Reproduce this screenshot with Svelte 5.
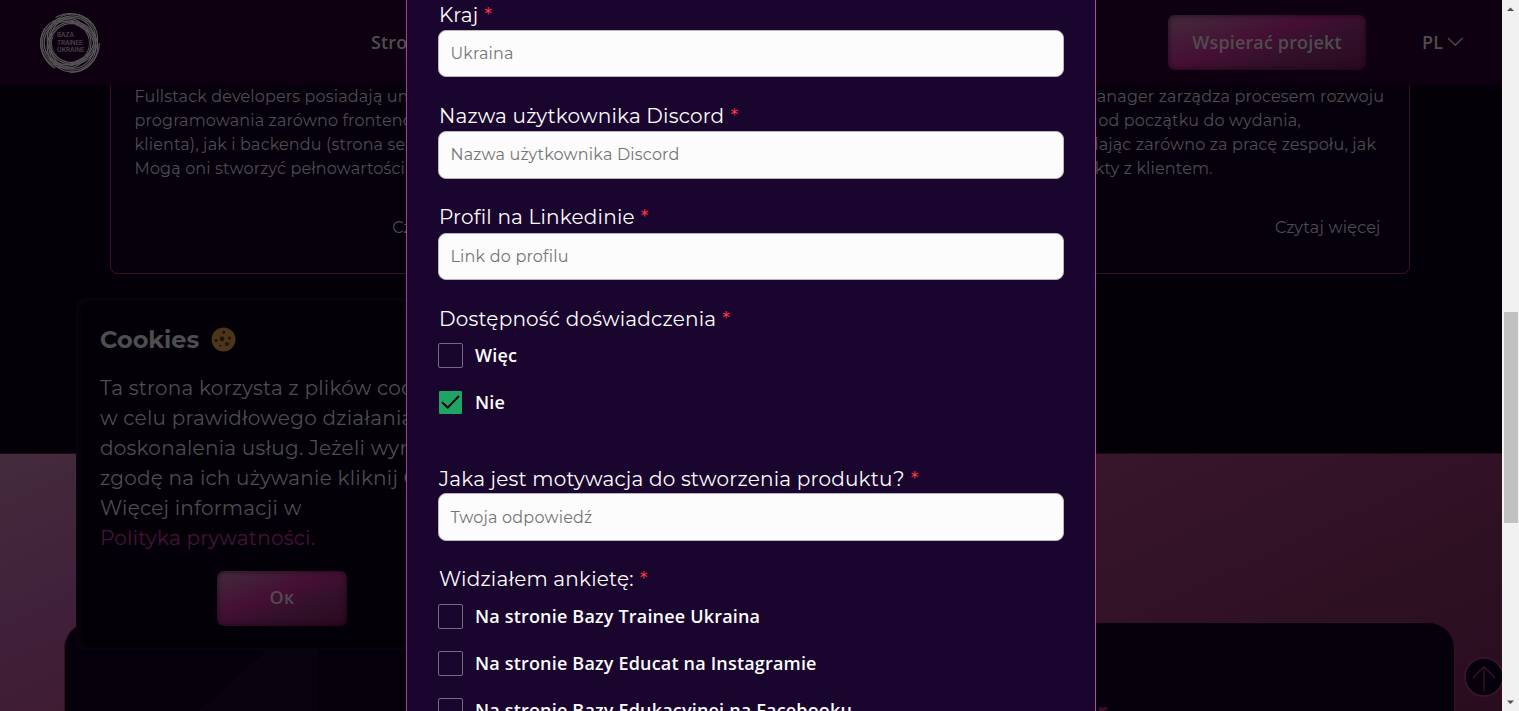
<script>
  const experience = [
    { text: 'Więc', checked: false },
    { text: 'Nie', checked: true }
  ];
  const sources = [
    { text: 'Na stronie Bazy Trainee Ukraina' },
    { text: 'Na stronie Bazy Educat na Instagramie' },
    { text: 'Na stronie Bazy Edukacyjnej na Facebooku' }
  ];
  const fields = [
    { label: 'Kraj', hint: 'Ukraina' },
    { label: 'Nazwa użytkownika Discord', hint: 'Nazwa użytkownika Discord' },
    { label: 'Profil na Linkedinie', hint: 'Link do profilu' }
  ];
  const motivation = { label: 'Jaka jest motywacja do stworzenia produktu?', hint: 'Twoja odpowiedź' };
  const leftCard = [
    'Fullstack developers posiadają um',
    'programowania zarówno frontend',
    'klienta), jak i backendu (strona ser',
    'Mogą oni stworzyć pełnowartości'
  ];
  const rightCard = [
    'Project manager zarządza procesem rozwoju',
    'produktu od początku do wydania,',
    'odpowiadając zarówno za pracę zespołu, jak',
    'i za kontakty z klientem.'
  ];
  const cookieLines = [
    'Ta strona korzysta z plików coo',
    'w celu prawidłowego działania',
    'doskonalenia usług. Jeżeli wyr',
    'zgodę na ich używanie kliknij O',
    'Więcej informacji w'
  ];
  const ringCentres = [[25.8, 30], [32.4, 26.2], [32.4, 33.8]];
  const ringRadii = [25.2, 23.4, 21.6];
</script>

{#snippet field(f)}
  <div class="field">
    <div class="label">{f.label}<b>*</b></div>
    <div class="input">{f.hint}</div>
  </div>
{/snippet}

{#snippet option(o)}
  <div class="option">
    <span class="box" class:checked={o.checked}>
      {#if o.checked}
        <svg width="23" height="23" viewBox="0 0 23 23"><path d="M3 11.2 8.7 16.6 20 5" fill="none" stroke="#0c0316" stroke-width="2" /></svg>
      {/if}
    </span>
    <span>{o.text}</span>
  </div>
{/snippet}

<div class="window">
  <div class="page">
    <header>
      <svg class="logo" width="60" height="60" viewBox="0 0 60 60">
        <g fill="none" stroke="#575557" stroke-width="1.2">
          {#each ringCentres as [cx, cy]}
            {#each ringRadii as r}<circle {cx} {cy} {r} />{/each}
          {/each}
          <circle cx="30" cy="30" r="29.3" stroke-dasharray="46 15.4" />
        </g>
        <circle cx="30.5" cy="30" r="18.4" fill="#0e0010" />
        <g class="logo-text" fill="#4f4d4f">
          <text x="17" y="23.8" textLength="17">BAZA</text>
          <text x="17" y="31.5" textLength="26">TRAINEE</text>
          <text x="17" y="39.2" textLength="28">UKRAINE</text>
        </g>
      </svg>
      <span class="nav">Stro</span>
      <div class="actions">
        <div class="button donate">Wspierać projekt</div>
        <div class="lang">PL
          <svg width="17" height="10" viewBox="0 0 17 10"><path d="M1 1 8.3 8.2 15.6 1" fill="none" stroke="#4c484c" stroke-width="1.4" /></svg>
        </div>
      </div>
    </header>

    <section class="cards">
      <article>
        {#each leftCard as s}<p>{s}</p>{/each}
        <div class="more">Czytaj więcej</div>
      </article>
      <article></article>
      <article>
        {#each rightCard as s}<p>{s}</p>{/each}
        <div class="more">Czytaj więcej</div>
      </article>
    </section>

    <section class="banner">
      <div class="panel">
        <svg width="260" height="88" viewBox="0 0 260 88"><path d="M133 88 233 0H252V88Z" fill="#090310" /></svg>
        <span class="headline">Dr</span>
      </div>
    </section>

    <div class="cookie">
      <h2>Cookies
        <svg width="25" height="25" viewBox="0 0 25 25">
          <circle cx="12.5" cy="12.5" r="12" fill="#4b351b" />
          <g fill="#201309"><circle cx="11" cy="11.8" r="2.4" /><circle cx="12.8" cy="5.3" r="1.5" /><circle cx="18.4" cy="11" r="1.5" /><circle cx="5.2" cy="13.6" r="1.5" /><circle cx="16" cy="17" r="2" /><circle cx="9.4" cy="18.8" r="1" /></g>
        </svg>
      </h2>
      {#each cookieLines as s}<p>{s}</p>{/each}
      <p class="link">Polityka prywatności.</p>
      <div class="button ok">Ок</div>
    </div>

    <svg class="up" width="40" height="40" viewBox="0 0 40 40">
      <circle cx="20" cy="20" r="19" fill="#06000d" stroke="#3d1533" stroke-width="1.5" />
      <path d="M20 34.5V10M9 21 20 9.7 31 21" fill="none" stroke="#35142e" stroke-width="1.3" />
    </svg>

    <div class="modal">
      {#each fields as f}{@render field(f)}{/each}
      <div class="label group">Dostępność doświadczenia<b>*</b></div>
      <div class="options first">
        {#each experience as o}{@render option(o)}{/each}
      </div>
      <div class="motivation">{@render field(motivation)}</div>
      <div class="label">Widziałem ankietę:<b>*</b></div>
      <div class="options second">
        {#each sources as o}{@render option(o)}{/each}
      </div>
    </div>
  </div>

  <div class="scrollbar">
    <svg width="17" height="17" viewBox="0 0 17 17"><path d="M5 11h7L8.5 7.5Z" fill="#505050" /></svg>
    <div class="thumb"></div>
    <svg class="down" width="17" height="17" viewBox="0 0 17 17"><path d="M5 6.5h7L8.5 10Z" fill="#505050" /></svg>
  </div>
</div>

<style>
  :global(body) { margin: 0; overflow: hidden; }
  .window { display: flex; width: 1519px; height: 711px; overflow: hidden; }
  .page {
    position: relative; width: 1502px; height: 711px; overflow: hidden;
    background: #030007; color: #4e4d4f; font-family: Montserrat, Inter, sans-serif;
    font-weight: 400; letter-spacing: .15px;
  }
  p, h2 { margin: 0; }

  header {
    display: flex; align-items: center; height: 85px; box-sizing: border-box;
    padding: 0 38px 0 40px; background: #0e0010;
    font: 600 18px "Open Sans", sans-serif;
  }
  .logo { flex: none; }
  .logo-text { font: 500 6.3px Inter, sans-serif; }
  .nav { margin-left: 271px; padding-bottom: 2px; }
  .actions { margin-left: auto; display: flex; align-items: center; gap: 56px; }
  .lang { display: flex; align-items: center; gap: 4px; width: 42px; padding-bottom: 2px; }
  .lang svg { flex: none; }
  .button {
    display: flex; align-items: center; justify-content: center; height: 55px; border-radius: 7px;
    box-sizing: border-box; padding-bottom: 2px;
    font: 600 18px "Open Sans", sans-serif; color: #504c4f;
    background: linear-gradient(160deg, #44283c 5%, #450f34 43%, #32102a 66%, #290920 100%);
    box-shadow: inset 0 0 5px 1px rgba(25, 3, 20, .6);
  }
  .donate { width: 198px; }

  .cards {
    display: grid; grid-template-columns: repeat(3, 417.4px); gap: 24px; height: 368px;
    padding-left: 109.5px; align-items: start; box-sizing: border-box;
  }
  article {
    height: 188.9px; box-sizing: border-box; border: 1px solid #34112f; border-top: 0;
    border-radius: 0 0 8px 8px; background: #06000d; padding: 0 28px 0 24px; font-size: 16px;
  }
  article p { height: 24px; line-height: 24px; white-space: nowrap; }
  .more { display: flex; justify-content: flex-end; margin-top: 35px; line-height: 24px; letter-spacing: .23px; }

  .banner {
    height: 258px; box-sizing: border-box; padding: 169px 47.4px 0 64.4px; border-top: 1px solid #1b0c18;
    background: linear-gradient(155deg, #442b3c 0%, #40213a 18%, #3f1b31 32%, #351429 62%, #2e1023 82%, #290d1f 100%);
  }
  .panel {
    display: flex; justify-content: space-between; height: 110px; box-sizing: border-box;
    border: 1px solid #32102b; border-bottom: 0; border-radius: 26px 26px 0 0; background: #06000d; margin-top: -1px;
  }
  .headline { padding: 74px 346px 0 0; font-weight: 700; font-size: 24px; color: #3d0c2c; line-height: 30px; }

  .cookie {
    position: absolute; left: 76px; top: 298px; width: 412px; height: 352px; box-sizing: border-box;
    padding: 26px 24px; border-radius: 10px; background: #030007; font-size: 20px; letter-spacing: .24px;
    box-shadow: inset 0 0 10px 1px #0c0910;
  }
  .cookie h2 { display: flex; align-items: center; gap: 11.4px; height: 30px; font-size: 24px; font-weight: 700; letter-spacing: 0; margin-bottom: 19px; }
  .cookie p { height: 30px; line-height: 30px; white-space: nowrap; }
  .cookie .link { color: #4a133b; }
  .ok { width: 130px; height: 55px; margin: 17.5px auto 0; }

  .up { position: absolute; left: 1464px; top: 657px; }

  .modal {
    position: absolute; left: 406px; top: 0; width: 690px; height: 711px; box-sizing: border-box;
    padding: .6px 31px 0; border: solid #a3428f; border-width: 0 1px; border-right-color: #b04d9b; background: #19052e;
    color: #fcfcfc; overflow: hidden;
  }
  .label { display: flex; gap: 6px; height: 29.4px; line-height: 29px; font-size: 20px; letter-spacing: .2px; padding-left: 1px; white-space: nowrap; }
  .label b { color: #ff3541; font-weight: 400; font-size: 20px; }
  .group { padding-top: .5px; height: 28.9px; }
  .field { height: 101.3px; }
  .motivation { height: 100.6px; }
  .motivation .label { height: 28.5px; }
  .input {
    display: flex; align-items: center; height: 47.3px; box-sizing: border-box; padding-left: 11.5px;
    border: 1px solid #b9b4c0; border-radius: 8px; background: #fcfcfc;
    font-size: 16px; font-weight: 400; letter-spacing: .19px; color: #757575;
  }
  .options { display: flex; flex-direction: column; font: 600 18px "Open Sans", sans-serif; letter-spacing: .18px; white-space: nowrap; }
  .options.first { gap: 22.5px; height: 131px; padding-top: 9px; box-sizing: border-box; }
  .options.second { gap: 22.3px; padding-top: 9.3px; }
  .option { display: flex; align-items: center; height: 24.5px; gap: 12px; }
  .box { width: 25px; height: 25px; box-sizing: border-box; flex: none; border: 1px solid #756b80; border-radius: 2px; }
  .box.checked { border-color: #19052e; background: #1ea463; }
  .box svg { display: block; }

  .scrollbar {
    display: flex; flex-direction: column; align-items: center; width: 17px; height: 711px; background: #f1f1f1;
  }
  .thumb { width: 14px; height: 211px; margin-top: 295px; background: #c1c1c1; }
  .down { margin-top: auto; }
</style>
